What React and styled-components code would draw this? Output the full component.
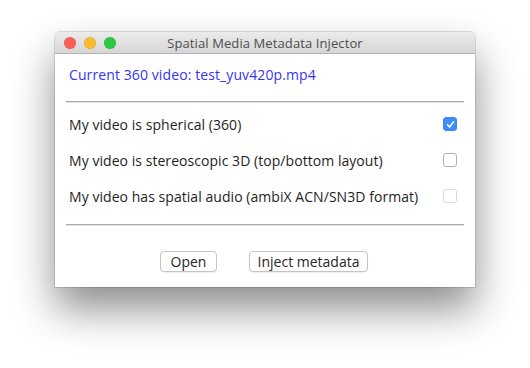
import React from 'react'
import styled, { createGlobalStyle } from 'styled-components'

const GlobalStyle = createGlobalStyle`
  body {
    margin: 0;
    background: #ffffff;
    font-family: "Open Sans", "Liberation Sans", sans-serif;
  }
`

const Stage = styled.div`
  width: 530px;
  height: 368px;
  padding: 32px 0 0 55px;
  box-sizing: border-box;
  overflow: hidden;
`

const Window = styled.div`
  width: 420px;
  height: 255px;
  background: #ffffff;
  border-radius: 5px 5px 0 0;
  box-shadow: 0 0 0 1px rgba(0, 0, 0, 0.12), 0 22px 42px rgba(0, 0, 0, 0.45);
  display: flex;
  flex-direction: column;
  overflow: hidden;
`

const TitleBar = styled.div`
  height: 21px;
  flex: none;
  position: relative;
  display: flex;
  align-items: center;
  justify-content: center;
  background: linear-gradient(#ebebeb, #d6d6d6);
  border-bottom: 1px solid #b4b4b4;
  font-size: 13px;
  letter-spacing: 0.1px;
  color: #4d4d4d;
`

const Lights = styled.div`
  position: absolute;
  left: 9px;
  top: 5px;
  display: flex;
  gap: 8px;
`

const Light = styled.span`
  width: 12px;
  height: 12px;
  border-radius: 50%;
  background: ${p => p.$color};
  box-shadow: inset 0 0 0 0.5px rgba(0, 0, 0, 0.15);
`

const Body = styled.div`
  flex: 1;
  padding: 0 11px;
  display: flex;
  flex-direction: column;
`

const Current = styled.div`
  color: #3434f5;
  font-size: 14px;
  letter-spacing: 0.1px;
  padding: 11px 0 0 3px;
  height: 36px;
  box-sizing: border-box;
`

const Rule = styled.div`
  height: 1px;
  background: #a8a8a8;
  border-bottom: 1px solid #e4e4e4;
  margin: ${p => p.$margin};
`

const Options = styled.div`
  display: flex;
  flex-direction: column;
  padding: 3px 0 0 3px;
`

const Row = styled.label`
  height: 36px;
  display: flex;
  align-items: center;
  justify-content: space-between;
  font-size: 14px;
  letter-spacing: 0.05px;
  color: #1e1e1e;
  padding-right: 7px;
`

const Box = styled.span`
  width: 14px;
  height: 14px;
  border-radius: 3px;
  box-sizing: border-box;
  display: flex;
  align-items: center;
  justify-content: center;
  background: ${p => (p.$checked ? '#3d8ef8' : '#ffffff')};
  border: 1px solid ${p => (p.$checked ? '#3a86ee' : p.$disabled ? '#dadada' : '#b0b0b0')};
`

const Buttons = styled.div`
  display: flex;
  justify-content: center;
  gap: 32px;
  padding: 25px 0 0 0;
  margin-left: -2px;
`

const Button = styled.button`
  width: ${p => p.$w}px;
  height: 21px;
  padding: 0;
  background: #ffffff;
  border: 1px solid #c4c4c4;
  border-radius: 4px;
  font-family: "Open Sans", "Liberation Sans", sans-serif;
  font-size: 14px;
  color: #262626;
  line-height: 18px;
  box-shadow: 0 1px 0 rgba(0, 0, 0, 0.06);
`

const Check = () => (
  <svg width="9" height="9" viewBox="0 0 9 9">
    <path d="M1.5 4.8 L3.6 7 L7.6 1.8" fill="none" stroke="#fff" strokeWidth="1.5" strokeLinecap="round" strokeLinejoin="round" />
  </svg>
)

const options = [
  { text: 'My video is spherical (360)', checked: true },
  { text: 'My video is stereoscopic 3D (top/bottom layout)' },
  { text: 'My video has spatial audio (ambiX ACN/SN3D format)', disabled: true },
]

const App = () => (
  <>
    <GlobalStyle />
    <Stage>
      <Window>
        <TitleBar>
          <Lights>
            <Light $color="#fc5f57" />
            <Light $color="#fdbc2e" />
            <Light $color="#2bc840" />
          </Lights>
          Spatial Media Metadata Injector
        </TitleBar>
        <Body>
          <Current>Current 360 video: test_yuv420p.mp4</Current>
          <Rule $margin="11px 0 0 0" />
          <Options>
            {options.map(o => (
              <Row key={o.text}>
                {o.text}
                <Box $checked={o.checked} $disabled={o.disabled}>
                  {o.checked && <Check />}
                </Box>
              </Row>
            ))}
          </Options>
          <Rule $margin="10px 0 0 0" />
          <Buttons>
            <Button $w={57}>Open</Button>
            <Button $w={119}>Inject metadata</Button>
          </Buttons>
        </Body>
      </Window>
    </Stage>
  </>
)

export default App
